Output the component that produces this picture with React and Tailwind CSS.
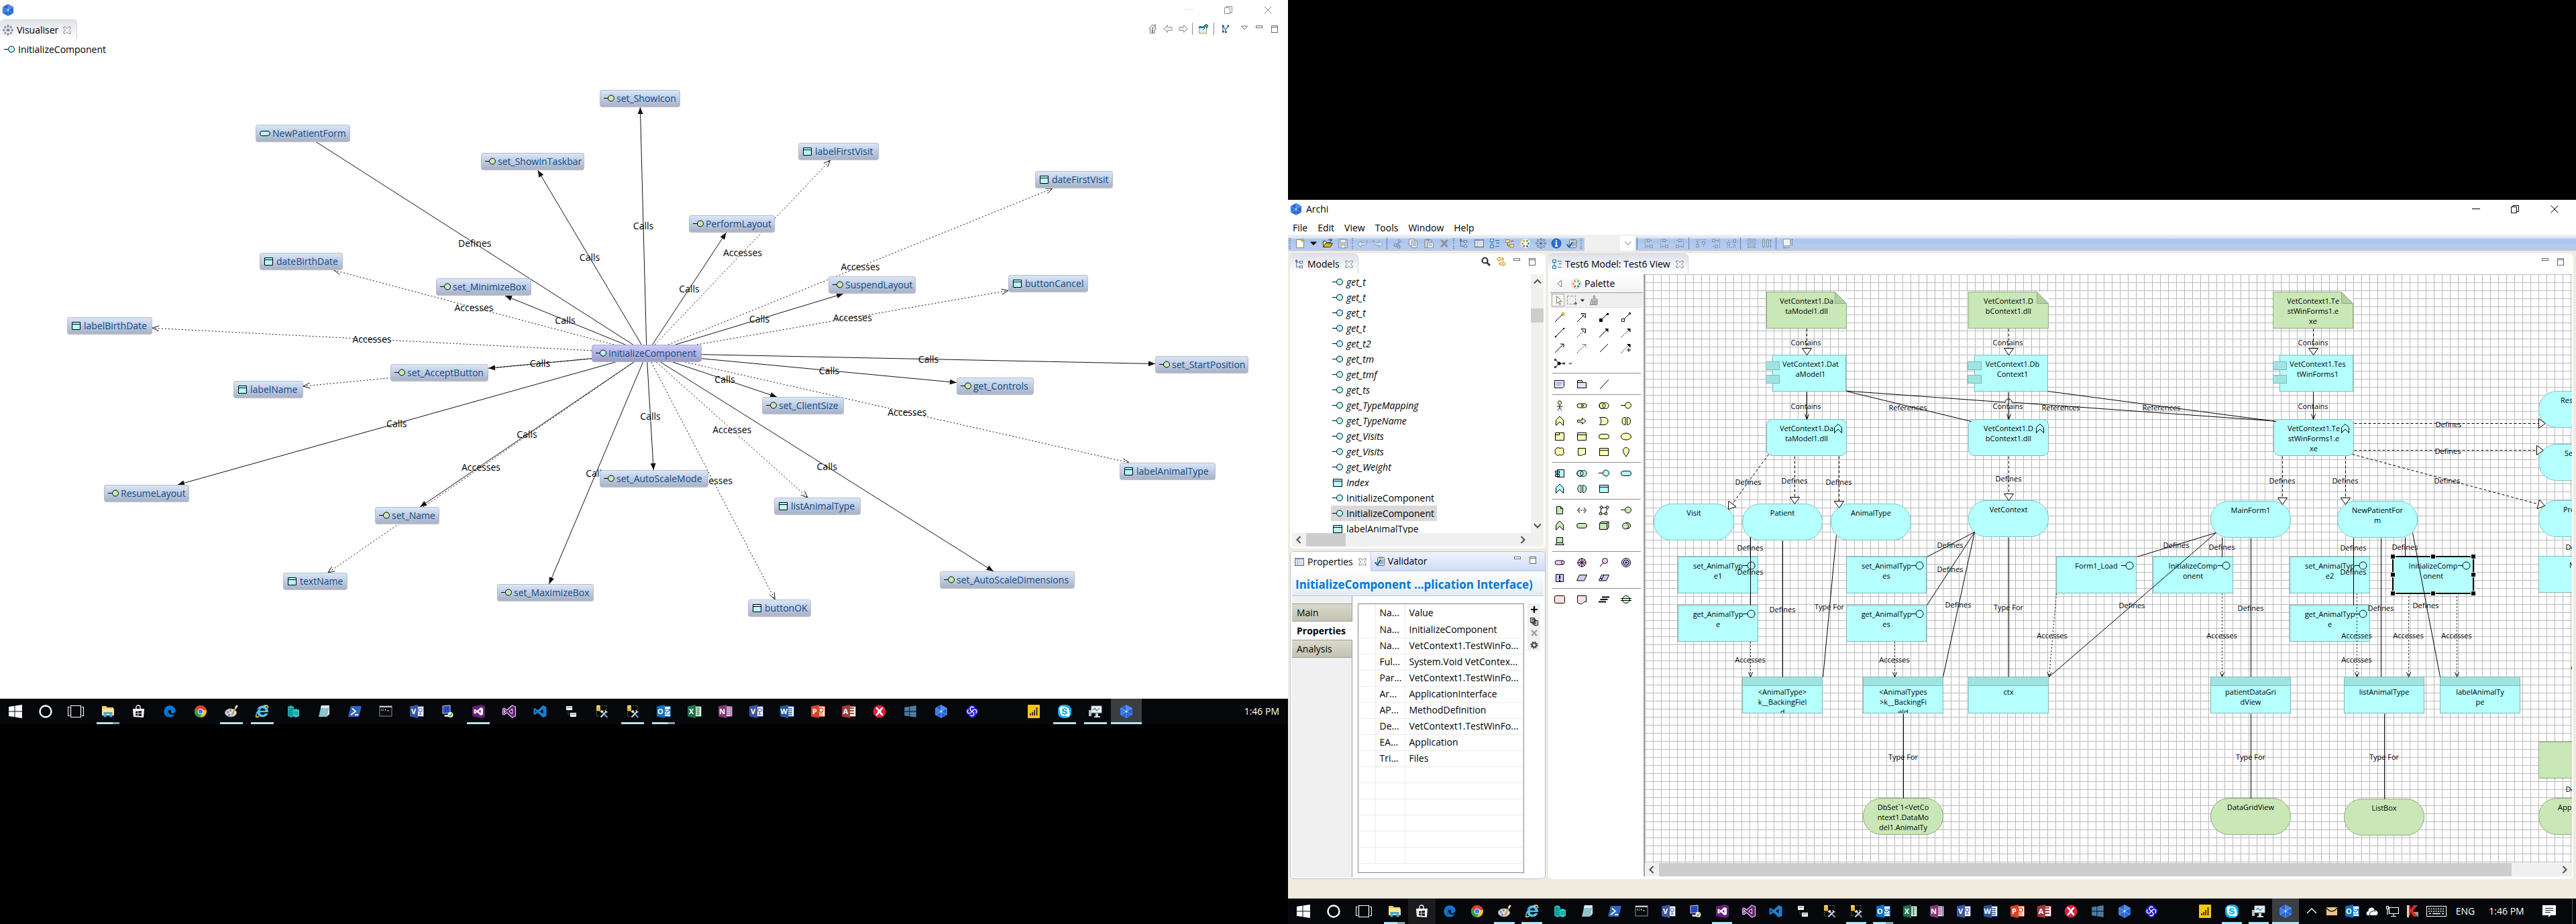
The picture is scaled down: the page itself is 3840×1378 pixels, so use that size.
import React from "react";
import { FaEdge, FaInternetExplorer, FaSkype, FaWindows } from "react-icons/fa";

/* ---------- shared ---------- */

const Svg = ({ s = 16, v = 16, className = "", children, ...rest }) => (
  <svg width={s} height={s} viewBox={`0 0 ${v} ${v}`} fill="none" className={`shrink-0 ${className}`} aria-hidden="true" {...rest}>
    {children}
  </svg>
);

const ArchiLogo = ({ s = 18 }) => (
  <Svg s={s} v={20}>
    <path d="M10 .5 18.500 5v10L10 19.500 1.500 15V5z" fill="#2463d2" stroke="#3f7be0" strokeWidth="1" />
    <path d="M10 1 18 5 10 10z" fill="#4a8af0" />
    <path d="M2 5v10l8-5z" fill="#3a78e6" />
    <path d="M10 1v18M2 5l16 10M18 5 2 15" stroke="#8db8fa" strokeWidth=".8" />
    <circle cx="10" cy="10" r="1.800" fill="#bcd6ff" />
  </Svg>
);

const CloseTab = () => (
  <Svg s={12} v={12}>
    <path d="M1 1h2.500L6 3.500 8.500 1H11v2.500L8.500 6 11 8.500V11H8.500L6 8.500 3.500 11H1V8.500L3.500 6 1 3.500z" stroke="#777" fill="#fff" />
  </Svg>
);
const MinIcon = () => (
  <Svg>
    <rect x="3.500" y="3.500" width="9" height="3" fill="#fff" stroke="#6b6b6b" />
  </Svg>
);
const MaxIcon = () => (
  <Svg>
    <rect x="3.500" y="3.500" width="9" height="10" fill="#fff" stroke="#6b6b6b" />
    <path d="M3 5.500h10" stroke="#6b6b6b" />
  </Svg>
);

const WindowButtons = ({ dim }) => {
  const c = dim ? "#8a8a8a" : "#000";
  return (
    <div className="flex h-full">
      <button aria-label="Minimize" className="flex w-[58px] items-center justify-center">
        <Svg s={12} v={12}><path d="M0 5.500h12" stroke={dim ? "#e0e0e0" : c} /></Svg>
      </button>
      <button aria-label="Restore" className="flex w-[58px] items-center justify-center">
        <Svg s={12} v={12}><path d="M.5 2.500h8v9h-8zM3 2.500v-2h8.500v9H9" stroke={c} /></Svg>
      </button>
      <button aria-label="Close" className="flex w-[60px] items-center justify-center">
        <Svg s={12} v={12}><path d="M.5.5l11 11M11.500.5l-11 11" stroke={c} /></Svg>
      </button>
    </div>
  );
};

const CY = "#b5ffff";
const YE = "#ffffb5";
const GR = "#c9e7b7";
const K = "#000";

const Iface = ({ fill = CY }) => (
  <Svg>
    <path d="M0 7.500h6" stroke={K} />
    <circle cx="11" cy="7.500" r="4.500" fill={fill} stroke={K} />
  </Svg>
);
const DataObj = ({ fill = CY }) => (
  <Svg>
    <path d="M1.500 2.500h13v11h-13zM1.500 5.500h13" fill={fill} stroke={K} />
  </Svg>
);
const SmallData = () => (
  <Svg>
    <path d="M1.500 2.500h12v11h-12zM1.500 5.500h12" fill={CY} stroke={K} />
  </Svg>
);
const FuncPill = ({ fill = CY }) => (
  <Svg>
    <rect x=".5" y="4.500" width="15" height="7" rx="3.500" fill={fill} stroke={K} />
  </Svg>
);
const RING = [[8, 1.8], [12.4, 3.6], [14.2, 8], [12.4, 12.4], [8, 14.2], [3.6, 12.4], [1.8, 8], [3.6, 3.6]];
const Radial = () => (
  <Svg>
    {RING.map(([x, y]) => <circle key={`${x}-${y}`} cx={x} cy={y} r="1.200" fill="#fff" stroke="#3c4358" strokeWidth=".9" />)}
    <path d="M8 4.500v7M4.500 8h7M5.500 5.500l5 5M10.500 5.500l-5 5" stroke="#6a7185" strokeWidth=".7" />
    <circle cx="8" cy="8" r="1.200" fill="#3c4358" />
  </Svg>
);
const TreeIcon = () => (
  <Svg>
    <path d="M3.500 2v11M3.500 5h5M3.500 12h5" stroke="#5a6f99" />
    <rect x="2" y="1.500" width="3" height="3" fill="#5a6f99" />
    <rect x="8.500" y="3.500" width="4" height="3" fill="#fff" stroke="#5a6f99" />
    <rect x="8.500" y="10.500" width="4" height="3" fill="#fff" stroke="#5a6f99" />
  </Svg>
);
const TableIcon = () => (
  <Svg>
    <rect x="1.500" y="2.500" width="13" height="11" fill="#fff" stroke="#5f6f88" />
    <path d="M1.500 3.500h13" stroke="#7f97c0" strokeWidth="2" />
    <path d="M2 6.500h12M2 8.500h12M2 10.500h12M2 12.500h12M5.500 4v9" stroke="#9fb0c8" strokeWidth=".8" />
  </Svg>
);
const DiagramIcon = () => (
  <Svg>
    <path d="M1.500 1.500h5v4h-5zM1.500 10.500h5v4h-5z" fill="#d6f0fa" stroke="#1d6fa5" />
    <path d="M9 3.500h6M9 12.500h6M10 7.500h5" stroke="#1d6fa5" />
    <path d="M4 6v4" stroke="#1d6fa5" />
  </Svg>
);
const ClipIcon = () => (
  <Svg>
    <rect x="4.500" y="2.500" width="10" height="12" rx="1" fill="#cfd8e6" stroke="#8a6b3f" />
    <rect x="7" y="1" width="5" height="3" fill="#9a9a9a" />
    <path d="M8 7h5M8 9h5M8 11h5" stroke="#6f86b0" />
    <path d="M.8 9.500 4.200 13.500 9 6" stroke="#1565c0" strokeWidth="2.200" />
  </Svg>
);
const PaletteIcon = () => (
  <Svg>
    <circle cx="8" cy="8" r="7.300" fill="#eef2f6" stroke="#c9d2da" />
    <circle cx="5.500" cy="4.300" r="1.500" fill="#d8a000" /><circle cx="10.500" cy="4.300" r="1.500" fill="#4caf50" />
    <circle cx="3.500" cy="8.300" r="1.500" fill="#f28c28" /><circle cx="12.500" cy="8.300" r="1.500" fill="#2e9e3e" />
    <circle cx="5.700" cy="12" r="1.500" fill="#e53935" /><circle cx="10.500" cy="12" r="1.500" fill="#1e64d8" />
  </Svg>
);

/* ---------- relationship graph (left monitor) ---------- */

const GRAPH_TOP = 90;
const HUB = { x: 882, y: 514, w: 164, label: "InitializeComponent" };
const GRAPH = [
  { label: "NewPatientForm", x: 381, y: 186, w: 141, k: "p", rel: "Defines" },
  { label: "set_ShowIcon", x: 894, y: 134, w: 120, k: "i", rel: "Calls" },
  { label: "set_ShowInTaskbar", x: 717, y: 228, w: 154, k: "i", rel: "Calls" },
  { label: "labelFirstVisit", x: 1190, y: 213, w: 120, k: "d", rel: "Accesses" },
  { label: "dateFirstVisit", x: 1543, y: 255, w: 116, k: "d", rel: "Accesses" },
  { label: "PerformLayout", x: 1027, y: 321, w: 128, k: "i", rel: "Calls" },
  { label: "dateBirthDate", x: 387, y: 377, w: 124, k: "d", rel: "Accesses" },
  { label: "set_MinimizeBox", x: 650, y: 415, w: 142, k: "i", rel: "Calls" },
  { label: "SuspendLayout", x: 1235, y: 412, w: 130, k: "i", rel: "Calls" },
  { label: "buttonCancel", x: 1503, y: 410, w: 119, k: "d", rel: "Accesses" },
  { label: "labelBirthDate", x: 100, y: 473, w: 127, k: "d", rel: "Accesses" },
  { label: "set_AcceptButton", x: 582, y: 543, w: 146, k: "i", rel: "Calls" },
  { label: "labelName", x: 348, y: 568, w: 104, k: "d", rel: "Accesses" },
  { label: "set_StartPosition", x: 1722, y: 531, w: 139, k: "i", rel: "Calls" },
  { label: "get_Controls", x: 1426, y: 563, w: 115, k: "i", rel: "Calls" },
  { label: "set_ClientSize", x: 1136, y: 592, w: 122, k: "i", rel: "Calls" },
  { label: "labelAnimalType", x: 1669, y: 690, w: 143, k: "d", rel: "Accesses" },
  { label: "ResumeLayout", x: 155, y: 723, w: 127, k: "i", rel: "Calls" },
  { label: "set_AutoScaleMode", x: 894, y: 701, w: 162, k: "i", rel: "Calls" },
  { label: "listAnimalType", x: 1154, y: 742, w: 129, k: "d", rel: "Accesses" },
  { label: "set_Name", x: 559, y: 756, w: 96, k: "i", rel: "Calls" },
  { label: "textName", x: 422, y: 854, w: 96, k: "d", rel: "Accesses" },
  { label: "set_MaximizeBox", x: 741, y: 871, w: 144, k: "i", rel: "Calls" },
  { label: "set_AutoScaleDimensions", x: 1401, y: 852, w: 201, k: "i", rel: "Calls" },
  { label: "buttonOK", x: 1115, y: 894, w: 94, k: "d", rel: "Accesses" },
];

const NODE_H = 26;
const centre = (n) => [n.x + n.w / 2, n.y + NODE_H / 2 - GRAPH_TOP];
const clipTo = (n, [fx, fy]) => {
  const [cx, cy] = centre(n);
  const dx = fx - cx, dy = fy - cy;
  const t = Math.min(n.w / 2 / Math.abs(dx || 1e-6), NODE_H / 2 / Math.abs(dy || 1e-6));
  return [cx + dx * t, cy + dy * t];
};
const LINKS = GRAPH.map((n) => ({ n, a: clipTo(HUB, centre(n)), b: clipTo(n, centre(HUB)) }));

const Arrow = ({ from, to, kind, len = 10, half = 4, dash, color = "#000" }) => {
  const [x1, y1] = from, [x2, y2] = to;
  const d = Math.hypot(x2 - x1, y2 - y1);
  const ux = (x2 - x1) / d, uy = (y2 - y1) / d;
  const bx = x2 - ux * len, by = y2 - uy * len;
  const a = [bx - uy * half, by + ux * half], b = [bx + uy * half, by - ux * half];
  const end = kind === "tri" ? [bx, by] : [x2, y2];
  return (
    <g stroke={color} fill="none">
      <line x1={x1} y1={y1} x2={end[0]} y2={end[1]} strokeDasharray={dash} />
      {kind === "solid" && <path d={`M${x2} ${y2}L${a}L${b}Z`} fill={color} stroke="none" />}
      {kind === "open" && <path d={`M${a}L${x2} ${y2}L${b}`} />}
      {kind === "tri" && <path d={`M${a}L${x2} ${y2}L${b}Z`} fill="#fff" />}
    </g>
  );
};

const GraphNode = ({ n, hub }) => (
  <div
    className={`absolute flex h-[26px] items-center gap-[3px] overflow-hidden whitespace-nowrap rounded-[4px] border border-b-2 pl-[5px] text-[14px] leading-[20px] text-[#0c4a86] ${
      hub ? "border-[#a9a9c0] bg-linear-to-b from-[#cccaff] to-[#9d9bc8]" : "border-[#b9bcc4] bg-linear-to-b from-[#d9e6fa] to-[#a8b3ca]"
    }`}
    style={{ left: n.x, top: n.y - GRAPH_TOP, width: n.w }}
  >
    {n.k === "d" ? <SmallData /> : n.k === "p" ? <FuncPill /> : <Iface fill={hub ? CY : GR} />}
    {n.label}
  </div>
);

const Graph = () => (
  <div className="relative min-h-0 flex-1 overflow-hidden">
    <svg className="absolute inset-0 h-full w-full" aria-hidden="true">
      {LINKS.map(({ n, a, b }) => {
        const kind = n.rel === "Calls" ? "solid" : n.rel === "Accesses" ? "open" : "none";
        return <Arrow key={n.label} from={a} to={b} kind={kind} dash={n.rel === "Accesses" ? "2 3" : undefined} color="#111" />;
      })}
    </svg>
    {LINKS.map(({ n, a, b }) => (
      <span key={n.label} className="absolute -translate-x-1/2 -translate-y-1/2 text-[14px] leading-[20px] text-black" style={{ left: (a[0] + b[0]) / 2, top: (a[1] + b[1]) / 2 }}>
        {n.rel}
      </span>
    ))}
    {GRAPH.map((n) => <GraphNode key={n.label} n={n} />)}
    <GraphNode n={HUB} hub />
  </div>
);

const LeftWindow = () => (
  <section className="flex min-h-0 flex-1 flex-col bg-white">
    <header className="flex h-[29px] items-center justify-between pl-[3px]">
      <ArchiLogo />
      <WindowButtons dim />
    </header>
    <div className="flex h-[29px] items-start justify-between">
      <div className="flex h-full items-center rounded-t-[6px] border-r border-t border-[#d3d3df] bg-linear-to-b from-[#e1e1e9] to-white pl-[4px] pr-[8px] pt-[2px]">
        <Radial />
        <span className="ml-[5px] mr-[7px] text-[14px] leading-[20px]">Visualiser</span>
        <button aria-label="Close Visualiser"><CloseTab /></button>
      </div>
      <div className="flex h-[27px] items-center pr-[12px]">
        <button aria-label="Home" className="flex w-[23px] justify-center">
          <Svg><path d="M2.500 8 8 1.500 13.500 8h-2v6.500h-7V8zM11 4V1.500h1.500v4" stroke="#888" fill="#eee" /><path d="M7 9h2v5H7z" fill="#777" /><path d="M7 6h2v2H7z" fill="#777" /></Svg>
        </button>
        <button aria-label="Back" className="flex w-[23px] justify-center">
          <Svg><path d="M1.500 8 7.500 2.500v3h6.500v5H7.500v3z" stroke="#8f8f8f" fill="#eee" /></Svg>
        </button>
        <button aria-label="Forward" className="flex w-[23px] justify-center">
          <Svg><path d="M14.500 8 8.500 2.500v3H2v5h6.500v3z" stroke="#8f8f8f" fill="#eee" /></Svg>
        </button>
        <span className="mx-[2px] h-[18px] w-px bg-[#888]" />
        <button aria-label="Pin content" className="flex w-[27px] justify-center">
          <Svg><rect x="1.500" y="4.500" width="11" height="10" fill="#d8f2fa" stroke="#b79c55" /><path d="M1 5.500h9" stroke="#2f74c8" strokeWidth="3" /><path d="M7 10 10 7" stroke="#555" /><path d="M9 3l4 4 2-4-3-2z" fill="#3fae49" stroke="#1c7a2a" /></Svg>
        </button>
        <span className="mx-[2px] h-[18px] w-px bg-[#888]" />
        <button aria-label="Layout" className="flex w-[29px] justify-center">
          <Svg><path d="M4 12V4l4 5 4-5M8 9v4" stroke="#4a86c8" strokeWidth="1.500" /><path d="M3 2.500h2.500V5H3zM10.500 2.500H13V5h-2.500zM3 11h2.500v2.500H3zM7 11.500h2.500V14H7z" fill="#1c3f78" /></Svg>
        </button>
        <button aria-label="View menu" className="flex w-[28px] justify-center pb-[4px]">
          <Svg><path d="M3.500 6h9L8 11z" stroke="#666" fill="#fff" /></Svg>
        </button>
        <button aria-label="Minimize view" className="flex w-[16px] justify-center"><MinIcon /></button>
        <button aria-label="Maximize view" className="ml-[7px] flex w-[16px] justify-center"><MaxIcon /></button>
      </div>
    </div>
    <div className="flex h-[32px] items-center gap-[5px] pl-[6px] text-[14px] leading-[20px]">
      <Iface />
      InitializeComponent
    </div>
    <Graph />
  </section>
);

/* ---------- taskbar ---------- */

const Office = ({ c, d, l, children }) => (
  <Svg s={22} v={22}>
    <rect x="10" y="4" width="11" height="14" fill="#fff" />
    {children || <path d="M13 7h6M13 10h6M13 13h6M13 16h6" stroke={c} strokeWidth="1.300" />}
    <path d="M10 3.500h11.500v15H10" stroke={c} />
    <path d="M1 3.500 13 1v20L1 18.500z" fill={d || c} />
    <text x="6.500" y="15" fontSize="11" fontWeight="700" textAnchor="middle" fill="#fff" fontFamily="Open Sans, sans-serif">{l}</text>
  </Svg>
);
const grid = (c) => <path d="M13 6h7M13 9h7M13 12h7M13 15h7M16.500 5v12" stroke={c} />;
const Tools = () => (
  <Svg s={20} v={20}>
    <path d="M2 1.500h6v8H2z" fill="#e2b93b" /><ellipse cx="5" cy="2" rx="3" ry="1.200" fill="#f7dd7d" />
    <path d="M10 1.500h7v6M2.500 11v6h5" stroke="#4f8a3f" strokeDasharray="2 1.500" />
    <path d="M8.500 18.500 17 10" stroke="#e4e6ea" strokeWidth="1.800" /><path d="M10 10l8 8.500" stroke="#c9ccd2" strokeWidth="1.600" /><path d="M14 14.500l4.500 4.500" stroke="#6a8fc7" strokeWidth="2.200" />
    <path d="M7.500 10.500 10 8l3 1.500-3 3z" fill="#dfe2e6" /><path d="M15 8l1 2.500 2.500.5" stroke="#e4e6ea" strokeWidth="1.300" />
  </Svg>
);
const VS_SHAPE = "M15.500 2 20.500 4v14l-5 2L7.500 13 3.500 16 1.500 15V7L3.500 6l4 3zM15.500 7.500v7L11 11zM3.500 9v4l2-2z";

const ICONS = {
  Start: <Svg s={20} v={20}><path d="M0 3 8.500 1.800V9.500H0zM9.500 1.600 20 0v9.500H9.500zM0 10.500h8.500v7.700L0 17zM9.500 10.500H20V20L9.500 18.400z" fill="#fff" /></Svg>,
  Cortana: <Svg s={20} v={20}><circle cx="10" cy="10" r="8.500" stroke="#fff" strokeWidth="2.400" /></Svg>,
  "Task View": <Svg s={24} v={24}><path d="M4.500 3.500h15v17h-15zM3 5.500H.5v13H3M21 5.500h2.500v13H21" stroke="#fff" strokeWidth="1.200" /></Svg>,
  Explorer: <Svg s={20} v={20}><path d="M1 2h6l2 2h9v11H1z" fill="#f6cf5f" /><path d="M1 6h18v10H1z" fill="#ffe596" /><path d="M3.500 18.500V11h13v7.500h-4V14h-5v4.500z" fill="#3fa9e0" /></Svg>,
  Store: <Svg s={20} v={20}><path d="M1 6h17l-1 13-15-1z" fill="#fff" /><path d="M6 7V3.500Q6 1 9 1t3 2.500V7" stroke="#fff" strokeWidth="1.300" /><path d="M5 10l3.500-.5V12.500H5zM9.300 9.400 14 9v3.500H9.300zM5 13.500h3.500v3L5 16zM9.300 13.500H14V17l-4.700-.5z" fill="#111" /></Svg>,
  Edge: <FaEdge size={18} color="#0b78d7" />,
  Chrome: <Svg s={20} v={20}><circle cx="10" cy="10" r="9" fill="#f7c91c" /><path d="M2.200 5.500A9 9 0 0 1 17.800 5.500L19 8h-9L6 12z" fill="#e23b2e" /><path d="M2.200 5.500A9 9 0 0 0 9.500 19l4-7.500H6z" fill="#2fa24c" /><circle cx="10" cy="10" r="4.300" fill="#fff" /><circle cx="10" cy="10" r="3.300" fill="#3f7fe8" /></Svg>,
  Paint: <Svg s={20} v={20}><ellipse cx="9" cy="12" rx="8.500" ry="6" fill="#cfe1ee" stroke="#8ba6b8" /><circle cx="4.500" cy="11" r="1.700" fill="#e2574c" /><circle cx="8.500" cy="8.800" r="1.600" fill="#5bb04e" /><circle cx="6.500" cy="15" r="1.600" fill="#3f74c8" /><circle cx="13" cy="13.500" r="1.500" fill="#e8b93c" /><path d="M10 16 17.500 3" stroke="#d98b3a" strokeWidth="2.200" /><path d="M16 5 18.500 1" stroke="#f4dcb5" strokeWidth="3" /></Svg>,
  "Internet Explorer": <Svg s={20} v={20}><FaInternetExplorer size={19} color="#4fc3f0" /><path d="M1 16Q-1 20 5 17.500M12 3Q19-1 18.500 5" stroke="#f6c52e" strokeWidth="1.800" /></Svg>,
  Servers: <Svg s={20} v={20}><path d="M2 3 7 1l4 2v14l-4 2-5-2z" fill="#1fb3b8" /><path d="M10 8l4-2 5 2v9l-5 2-4-2z" fill="#2fd0d2" /><path d="M3 6h7M3 9h7M3 12h7M3 15h7M11 11h7M11 14h7" stroke="#08696e" /></Svg>,
  Notepad: <Svg s={20} v={20}><path d="M6 1h12l-4 17H2z" fill="#8fc3cf" /><path d="M6 1h12l-1 4H5z" fill="#d9edf0" /><path d="M14 18l4-17v13z" fill="#e9e9e9" /></Svg>,
  PowerShell: <Svg s={20} v={20}><path d="M4 2h16l-4 16H0z" fill="#2f64c4" /><path d="M6 5.500 11 10l-7 5M10 15h5" stroke="#fff" strokeWidth="1.800" /></Svg>,
  "Command Prompt": <Svg s={20} v={20}><rect x="1" y="2" width="18" height="15" fill="#0a0a0a" stroke="#8f8f8f" /><path d="M1 3h18" stroke="#c9c9c9" strokeWidth="2" /><path d="M4 6v3M6.500 6v1M6.500 8v1M9 6l1 3M12 9h3" stroke="#ddd" /></Svg>,
  Visio: <Office c="#3955a3" l="V"><path d="M14 7h5v4h-5zM16.500 11v4M14 15h5" stroke="#3955a3" /></Office>,
  "Remote Desktop": <Svg s={20} v={20}><path d="M3 2l11-1v11L3 13z" fill="#2447c8" stroke="#cdd6e6" /><path d="M5 15h8l2 3H6z" fill="#c9ced6" /><circle cx="14.500" cy="15" r="4" fill="#e8efe4" /><path d="M12.500 15l1.500 2 3-4" stroke="#4b9c3c" strokeWidth="1.500" /></Svg>,
  "Visual Studio": <Svg s={22} v={22}><path d="M2 4 15 1l6 2v16l-6 2L2 18z" fill="#68217a" /><path d="M14.500 5 18 6.500v9L14.500 17 9 12.300 6 14.500 4.500 13.700V8.300L6 7.500l3 2.200zM14.500 8.500v5L11.500 11zM6 9.500v3L7.500 11z" fill="#fff" fillRule="evenodd" /></Svg>,
  "Visual Studio 2013": <Svg s={22} v={22}><path d={VS_SHAPE} fill="#68217a" stroke="#e6d8ea" strokeWidth="1.100" fillRule="evenodd" /></Svg>,
  "Visual Studio Code": <Svg s={22} v={22}><path d={VS_SHAPE} fill="#1b80cc" fillRule="evenodd" /></Svg>,
  Network: <Svg s={20} v={20}><path d="M3 2h9v6H3z" fill="#fff" /><path d="M9 12h9v6H9z" fill="#fff" /><path d="M4 4h7M10 14h7" stroke="#555" /><path d="M6 8v6h3" stroke="#777" strokeDasharray="1 1" /></Svg>,
  "SQL Tools": <Tools />,
  "SQL Profiler": <Tools />,
  Outlook: <Office c="#0a70c8" l="O"><path d="M11 8h10v7H11zM11 8l5 4.500L21 8" stroke="#0a70c8" strokeWidth="1.200" /></Office>,
  Excel: <Office c="#1f7244" l="X">{grid("#1f7244")}</Office>,
  OneNote: <Office c="#80397b" l="N"><path d="M13 6h5M13 9h5M13 12h5M13 15h5M19.500 4v14" stroke="#80397b" strokeWidth="1.400" /></Office>,
  "Visio 2": <Office c="#3955a3" l="V"><path d="M14 7h5v4h-5zM16.500 11v4M14 15h5" stroke="#3955a3" /></Office>,
  Word: <Office c="#2a5699" l="W" />,
  PowerPoint: <Office c="#d24625" l="P"><circle cx="16" cy="9" r="3" stroke="#d24625" strokeWidth="1.300" /><path d="M13 14h6M13 16.500h6" stroke="#d24625" /></Office>,
  Access: <Office c="#a4373a" l="A"><path d="M13 6h6M13 10h6M13 14h6" stroke="#a4373a" strokeWidth="2" /></Office>,
  XMind: <Svg s={20} v={20}><circle cx="10" cy="10" r="9.500" fill="#d6213f" /><path d="M5 4.500q4 2.500 4 5.500t-4 5.500M15 4.500q-4 2.500-4 5.500t4 5.500M8 10h4" stroke="#fff" strokeWidth="2.600" /></Svg>,
  Windows: <FaWindows size={20} color="#4a7ca4" />,
  "Archi 3": <ArchiLogo s={20} />,
  Swirl: (
    <Svg s={20} v={20}>
      <g fill="#2a22c8"><circle cx="10" cy="6" r="5.500" /><circle cx="14" cy="10" r="5.500" /><circle cx="10" cy="14" r="5.500" /><circle cx="6" cy="10" r="5.500" /></g>
      <g stroke="#fff" strokeWidth="1.300"><path d="M10 10Q6 7.500 7.500 4.500 10 2 12.500 4.500" /><path d="M10 10Q12.500 6 15.500 7.500 18 10 15.500 12.500" /><path d="M10 10Q14 12.500 12.500 15.500 10 18 7.500 15.500" /><path d="M10 10Q7.500 14 4.500 12.500 2 10 4.500 7.500" /></g>
    </Svg>
  ),
  gap: null,
  "Power BI": <Svg s={20} v={20}><rect x="1" y="0" width="18" height="20" rx="1" fill="#f2c811" /><path d="M5 16v-3M8 16v-5M11 16V8M14.500 16V4" stroke="#222" strokeWidth="1.700" /></Svg>,
  Skype: <span className="flex h-[20px] w-[20px] items-center justify-center rounded-[8px] bg-[#00aff0]"><FaSkype size={18} color="#fff" /></span>,
  Monitor: <Svg s={20} v={20}><path d="M4 2h15v10H4z" fill="#f3f6f8" stroke="#b9c2c8" /><path d="M6 8l3-3 3 4 4-4" stroke="#2f8fc0" strokeWidth="1.300" /><path d="M10 13h4v4h3v2H8v-2h2z" fill="#cfd4d8" /><path d="M0 8h4v9H0z" fill="#b9bec2" /></Svg>,
  Archi: <ArchiLogo s={20} />,
};
const APPS = Object.keys(ICONS).slice(3);

const Taskbar = ({ wide, running, hot, children }) => (
  <footer className="flex h-[38px] shrink-0 items-stretch overflow-hidden bg-[#05070a] text-white">
    <div className="mr-[3px] flex">
      {["Start", "Cortana", "Task View"].map((n) => (
        <button key={n} aria-label={n} className="flex w-[45px] items-center justify-center">{ICONS[n]}</button>
      ))}
    </div>
    {APPS.map((n, i) => {
      const active = n === "Archi";
      const w = wide ? "w-[46px]" : i < 9 ? "w-[41px]" : "w-[40px]";
      if (n === "gap") return <span key={n} className={w} />;
      return (
        <button key={n} aria-label={n} className={`relative flex items-center justify-center ${w} ${active ? "bg-[#3b3f44]" : hot === n ? "bg-[#1c1c1f]" : ""}`}>
          {ICONS[n]}
          {running.includes(n) && <span className={`absolute bottom-0 h-[3px] bg-[#aee8fa] ${active ? "inset-x-0" : wide ? "inset-x-[6px]" : "inset-x-[5px]"}`} />}
          {(n === "Explorer" || n === "Outlook") && <span className="absolute bottom-0 right-[6px] h-[3px] w-[10px] bg-[#7fa6b2]" />}
        </button>
      );
    })}
    <div className="flex flex-1 items-center justify-end">{children}</div>
  </footer>
);

const RUN = ["Explorer", "Paint", "Internet Explorer", "Visual Studio", "SQL Profiler", "Outlook", "Skype", "Monitor", "Archi"];

/* ---------- Archi main window (right monitor) ---------- */

const Handle = () => <span className="flex w-[6px] justify-center"><span className="h-[16px] border-l-2 border-dotted border-[#8c94a8]" /></span>;
const Sep = () => <span className="flex w-[5px] justify-center"><span className="h-[18px] w-px bg-[#6f7f9f]" /></span>;
const TB = ({ label, children, className = "w-[23px]" }) => (
  <button aria-label={label} className={`flex items-center justify-center ${className}`}>{children}</button>
);
const G = "#8d94a3";
const Align = ({ r }) => (
  <Svg className={r}>
    <path d="M2.500 1v14" stroke={G} strokeDasharray="2 1" />
    <rect x="5.500" y="1.500" width="4" height="4" stroke={G} /><rect x="9.500" y="10.500" width="4" height="4" stroke={G} />
    <path d="M4 12.500h5M13 3.500h-2M6 10.500l-2 2 2 2" stroke={G} />
  </Svg>
);

const Toolbar = () => (
  <div className="flex h-[24px] items-center bg-[linear-gradient(#f1f0ee_0px,#e3e9f8_4px,#a9c7ef_7px,#a9c7ef_12px,#b8c9ee_14px,#b8c9ee_24px)] pt-[2px]">
    <Handle />
    <TB label="New"><Svg><path d="M2.500 2.500h8l3 3v9h-11z" fill="#fdfdf4" stroke="#8a8a7a" /><path d="M12 0v7M8.500 3.500h7M10 1.500l4 4M14 1.500l-4 4" stroke="#c89b2a" /></Svg></TB>
    <TB label="New menu" className="w-[17px]"><Svg s={10} v={10}><path d="M0 2.500h10L5 8z" fill="#000" /></Svg></TB>
    <TB label="Open" className="ml-px w-[23px]"><Svg><path d="M1.500 13.500v-9h4l1 2h6v2" fill="#f7e27b" stroke="#333" /><path d="M1.500 13.500 5 8h10.500L12 13.500z" fill="#d8b921" stroke="#333" /><path d="M9 3q3-3 5 1M14 1v3h-3" stroke="#333" /></Svg></TB>
    <TB label="Save"><Svg><path d="M1.500 1.500h12l1 1v12h-13z" fill="#c8cfdd" stroke={G} /><path d="M4 2h8v5H4zM5 10h6v5H5z" fill="#eef1f7" stroke={G} /></Svg></TB>
    <Handle />
    <TB label="Undo"><Svg><path d="M1 9 6 4v3q8 1 9-4 1 8-9 8v3z" fill="#dde3ee" stroke={G} /></Svg></TB>
    <TB label="Redo"><Svg><path d="M15 9 10 4v3Q2 8 1 3q-1 8 9 8v3z" fill="#dde3ee" stroke={G} /></Svg></TB>
    <Sep />
    <TB label="Cut" className="ml-[2px] w-[23px]"><Svg><path d="M9 1v9M13 4 5 10" stroke={G} strokeWidth="1.500" /><circle cx="4" cy="10.500" r="2" stroke={G} strokeWidth="1.500" /><circle cx="9" cy="13" r="2" stroke={G} strokeWidth="1.500" /></Svg></TB>
    <TB label="Copy"><Svg><path d="M1.500 1.500h8v10h-8z" fill="#e3e8f2" stroke={G} /><path d="M5.500 4.500h8v10h-8z" fill="#e3e8f2" stroke={G} /><path d="M7 7h5M7 9h5M7 11h5" stroke={G} /></Svg></TB>
    <TB label="Paste"><Svg><rect x="1.500" y="2.500" width="10" height="12" fill="#c2c9d8" stroke={G} /><rect x="4" y="1" width="5" height="3" fill={G} /><path d="M6.500 6.500h8v8h-8z" fill="#eef1f7" stroke={G} /><path d="M8 9h5M8 11h5" stroke={G} /></Svg></TB>
    <TB label="Delete"><Svg><path d="M2 3.500 4.500 2 8 5.500 11.500 2 14 3.500 10 8l4 4.500-2.500 1.500L8 10.500 4.500 14 2 12.500 6 8z" fill="#8c919c" /></Svg></TB>
    <Handle />
    <TB label="Models"><TreeIcon /></TB>
    <TB label="Properties"><TableIcon /></TB>
    <TB label="Outline"><DiagramIcon /></TB>
    <TB label="Navigator"><Svg><path d="M1.500 2.500h6v4h-6zM7.500 9.500h6v4h-6z" fill="#f9dd9a" stroke="#b98627" /><path d="M4.500 7v4.500H7M9 4.500h4" stroke="#555" /></Svg></TB>
    <TB label="Palette"><PaletteIcon /></TB>
    <TB label="Visualiser"><Radial /></TB>
    <TB label="Hints"><Svg><circle cx="8" cy="8" r="7" fill="#2b6fd6" stroke="#1a4fa8" /><path d="M8 3v2.200M6.500 7H8v5M6 12h4" stroke="#fff" strokeWidth="1.800" /></Svg></TB>
    <TB label="Validator"><ClipIcon /></TB>
    <Handle />
    <span className="relative ml-[2px] flex h-[22px] w-[76px] bg-[#f0f0f0]">
      <select aria-label="Zoom" disabled className="h-full w-full appearance-none border-r-[23px] border-white bg-[#f0f0f0] opacity-100" />
      <Svg s={12} v={12} className="absolute right-[5px] top-[5px]"><path d="M1.500 3.500 6 8l4.500-4.500" stroke="#a6a6a6" strokeWidth="1.300" /></Svg>
    </span>
    <Sep />
    <TB label="Align left" className="ml-[3px] w-[23px]"><Align /></TB>
    <TB label="Align center"><Align /></TB>
    <TB label="Align right"><Align r="-scale-x-100" /></TB>
    <Sep />
    <TB label="Align top" className="ml-[3px] w-[23px]"><Align r="rotate-90" /></TB>
    <TB label="Align middle"><Align r="rotate-180" /></TB>
    <TB label="Align bottom"><Align r="-rotate-90" /></TB>
    <Sep />
    <TB label="Match width" className="ml-[2px] w-[23px]"><Svg><path d="M2.500 1.500h11v3h-11zM2.500 7.500h11v3h-11zM2 13.500h12M4 12l-2 1.500L4 15M12 12l2 1.500-2 1.500" stroke={G} /></Svg></TB>
    <TB label="Match height"><Svg><path d="M1.500 2.500h3v11h-3zM7.500 2.500h3v11h-3zM13.500 2v12M12 4l1.500-2L15 4M12 12l1.500 2 1.500-2" stroke={G} /></Svg></TB>
    <Sep />
    <TB label="Default size" className="ml-[3px] w-[23px]"><Svg><rect x="1.500" y="1.500" width="10" height="10" fill="#f4f4f4" stroke={G} /><path d="M14.500 1v11M1 14.500h11M13 3l1.500-2L16 3M3 13l-2 1.500L3 16" stroke={G} /></Svg></TB>
  </div>
);

const Chevron = ({ d }) => (
  <Svg s={14} v={14} className={{ up: "", down: "rotate-180", left: "-rotate-90", right: "rotate-90" }[d]}>
    <path d="M2 9.500 7 4.500l5 5" stroke="#505050" strokeWidth="2" />
  </Svg>
);

const Tab = ({ icon, children, className = "", closable = true }) => (
  <div className={`flex items-center text-[14px] leading-[20px] ${className}`}>
    {icon}
    <span className="ml-[4px] whitespace-nowrap">{children}</span>
    {closable && <button aria-label={`Close ${children}`} className="ml-[8px]"><CloseTab /></button>}
  </div>
);

const MODELS = ["get_t", "get_t", "get_t", "get_t", "get_t2", "get_tm", "get_tmf", "get_ts", "get_TypeMapping", "get_TypeName", "get_Visits", "get_Visits", "get_Weight", "Index", "InitializeComponent", "InitializeComponent", "labelAnimalType"];

const Models = () => (
  <section className="flex h-[440px] shrink-0 flex-col rounded-[6px] bg-white pb-[3px] pl-[3px] pr-[3px]">
    <div className="-ml-[3px] flex h-[31px] items-start justify-between">
      <Tab icon={<TreeIcon />} className="h-[29px] rounded-t-[6px] border-r border-t border-[#d3d6e4] bg-linear-to-b from-[#dfe1eb] to-white pl-[6px] pr-[7px] pt-[2px]">Models</Tab>
      <div className="flex items-center gap-[7px] pr-[9px] pt-[4px]">
        <button aria-label="Search"><Svg><circle cx="6.500" cy="6.500" r="4" stroke="#333" strokeWidth="2.200" /><path d="m9.500 9.500 4.500 4.500" stroke="#333" strokeWidth="2.800" /></Svg></button>
        <button aria-label="Link with editor"><Svg><path d="M1 4.500 5 1v2h6v3H5v2zM15 11.500 11 8v2H5v3h6v2z" fill="#fdf0c0" stroke="#c88a14" /></Svg></button>
        <button aria-label="Minimize models"><MinIcon /></button>
        <button aria-label="Maximize models"><MaxIcon /></button>
      </div>
    </div>
    <div className="flex min-h-0 flex-1">
      <ul className="min-w-0 flex-1 overflow-hidden pl-[58px]">
        {MODELS.map((m, i) => (
          <li key={i} className="h-[23px]">
            <button className={`flex h-[23px] items-center gap-[5px] whitespace-nowrap pl-[2px] pr-[4px] text-[14px] leading-[20px] ${i < 14 ? "italic" : ""} ${i === 15 ? "bg-[#d9d9d9]" : ""}`}>
              {i === 13 || i === 16 ? <DataObj /> : <Iface />}
              {m}
            </button>
          </li>
        ))}
      </ul>
      <div className="flex w-[19px] flex-col items-center bg-[#f0f0f0] py-[4px]">
        <Chevron d="up" />
        <span className="mt-[33px] h-[21px] w-full bg-[#cdcdcd]" />
        <span className="flex-1" />
        <Chevron d="down" />
      </div>
    </div>
    <div className="flex h-[20px] items-center bg-[#f0f0f0] pl-[3px] pr-[24px]">
      <Chevron d="left" />
      <span className="ml-[4px] h-full w-[59px] bg-[#cdcdcd]" />
      <span className="flex-1" />
      <Chevron d="right" />
    </div>
  </section>
);

const PROPS = [
  ["Na...", "InitializeComponent"], ["Na...", "VetContext1.TestWinFo..."], ["Ful...", "System.Void VetContex..."], ["Par...", "VetContext1.TestWinFo..."],
  ["Ar...", "ApplicationInterface"], ["AP...", "MethodDefinition"], ["De...", "VetContext1.TestWinFo..."], ["EA...", "Application"], ["Tri...", "Files"],
  ["", ""], ["", ""], ["", ""], ["", ""], ["", ""], ["", ""],
];

const Properties = () => (
  <section className="flex min-h-0 flex-1 flex-col overflow-hidden rounded-[6px] border border-[#b3c3e8] bg-white px-[2px] pb-[2px]">
    <div className="-mx-[2px] flex h-[29px] shrink-0 bg-linear-to-b from-[#eff3fd] to-[#cfdbf4]">
      <Tab icon={<TableIcon />} className="rounded-tr-[6px] border-r border-[#b3c3e8] bg-white pl-[5px] pr-[6px]">Properties</Tab>
      <div className="flex flex-1 justify-between border-b border-[#b3c3e8]">
        <Tab icon={<ClipIcon />} closable={false} className="pl-[5px]">Validator</Tab>
        <div className="flex items-start gap-[7px] pr-[10px] pt-[4px]">
          <button aria-label="Minimize properties"><MinIcon /></button>
          <button aria-label="Maximize properties"><MaxIcon /></button>
        </div>
      </div>
    </div>
    <h2 className="flex h-[37px] shrink-0 items-center overflow-hidden whitespace-nowrap border-b border-[#b9cadd] bg-linear-to-b from-white to-[#e3ebf3] pl-[5px] pt-[4px] text-[17px] font-bold leading-[24px] text-[#0078d7]">
      InitializeComponent ...plication Interface)
    </h2>
    <div className="flex min-h-0 flex-1">
      <nav className="flex w-[90px] shrink-0 flex-col border-r border-[#9c9c9c] bg-[#f0f0f0] pt-[11px] text-[14px] leading-[20px]">
        <button className="-mr-px h-[27px] border-b border-r border-t border-[#9c9c9c] bg-linear-to-b from-[#dadacb] to-[#c3c3b2] pl-[7px] text-left">Main</button>
        <button className="-mr-px h-[27px] bg-white pl-[7px] text-left font-bold">Properties</button>
        <button className="-mr-px h-[27px] border-b border-r border-t border-[#9c9c9c] bg-linear-to-b from-[#dadacb] to-[#c3c3b2] pl-[7px] text-left">Analysis</button>
      </nav>
      <div className="mb-[6px] ml-[8px] mt-[11px] min-w-0 flex-1 overflow-hidden border border-[#828790] px-px">
        <table className="w-full table-fixed border-collapse text-left text-[14px] leading-[20px]">
          <colgroup><col className="w-[24px]" /><col className="w-[44px]" /><col /></colgroup>
          <thead>
            <tr className="h-[26px]">
              <td className="border-r border-[#e5e5e5]" />
              <th className="border-r border-[#e5e5e5] pl-[6px] font-normal">Na...</th>
              <th className="border-r border-[#e5e5e5] pl-[6px] font-normal">Value</th>
            </tr>
          </thead>
          <tbody>
            {PROPS.map(([a, b], i) => (
              <tr key={i} className="h-[24px] border-b border-[#ececec]">
                <td className="border-r border-[#ececf2]" />
                <td className="whitespace-nowrap border-r border-[#ececf2] pl-[6px]">{a}</td>
                <td className="overflow-hidden whitespace-nowrap border-r border-[#ececf2] pl-[6px]">{b}</td>
              </tr>
            ))}
          </tbody>
        </table>
      </div>
      <div className="ml-[5px] mr-[5px] mt-[11px] flex h-[71px] w-[19px] flex-col items-center justify-around bg-[#f0f0f0]">
        <button aria-label="Add property"><Svg s={12} v={12}><path d="M6 1v10M1 6h10" stroke="#000" strokeWidth="2.200" /></Svg></button>
        <button aria-label="Add multiple"><Svg s={12} v={12}><path d="M.5.5h6v7h-6zM3 2.500h5v7H3zM5.500 4.500h6v7h-6z" fill="#c9c9c9" stroke="#222" /></Svg></button>
        <button aria-label="Remove property"><Svg s={12} v={12}><path d="M2 2l8 8M10 2l-8 8" stroke="#9a9a9a" strokeWidth="2.200" /></Svg></button>
        <button aria-label="Manage properties"><Svg s={12} v={12}><circle cx="6" cy="6" r="3" stroke="#444" strokeWidth="2" /><circle cx="6" cy="6" r="4.800" stroke="#444" strokeWidth="1.600" strokeDasharray="2 1.770" /></Svg></button>
      </div>
    </div>
  </section>
);

/* ---------- palette ---------- */

const P = ({ d, f = "none", s = K, children, ...r }) => <Svg><path d={d} fill={f} stroke={s} {...r} />{children}</Svg>;
const diag = "M1 15 13 3";
const Chev = (f) => <P d="M2.500 14.500v-8L8 1l5.500 5.500v8L8 9z" f={f} />;
const Inter = (f) => <P d="M7 2.500v11q-5 0-5-5.500t5-5.500zM9.500 2.500v11q5 0 5-5.500t-5-5.500z" f={f} />;
const Collab = (f) => <Svg><circle cx="5.500" cy="8" r="4.500" fill={f} stroke={K} /><circle cx="10.500" cy="8" r="4.500" fill={f} stroke={K} /><circle cx="5.500" cy="8" r="4.500" stroke={K} /></Svg>;

const PALETTE = [
  [
    <P d={diag}><path d="M13 0v7M9.500 3.500h7M11 1l4 5M15 1l-4 5" stroke="#c89b2a" /></P>,
    <P d="M1 15 12 4M7 2.500h6.500V9z" />, <P d="M4 12 13 3"><path d="M1 10h5v5H1zM12 2h3v3h-3z" fill={K} /></P>, <P d="M5 11 13 3M1.500 10.500h4v4h-4zM12.500 1.500h2v2h-2z" />,
    <P d="M2 14 14 2"><circle cx="2" cy="14" r="1.300" fill={K} /><circle cx="14" cy="2" r="1.300" fill={K} /></P>,
    <Svg><path d="M1 15 10 6" stroke={K} strokeDasharray="2 1.500" /><path d="M7 2.500h6.500V9z" stroke={K} /></Svg>, <P d="M1 15 13 3"><path d="M9 2h5.500v5.500z" fill={K} /></P>, <Svg><path d="M1 15 13 3" stroke={K} strokeDasharray="2 1.500" /><path d="M9 2h5.500v5.500z" fill={K} /></Svg>,
    <P d="M1 15 14 2M9 2h5v5" />, <Svg><path d="M1 15 13 3M9 2.500h5v5" stroke={K} strokeDasharray="1.500 1.500" /></Svg>, <P d="M2 14 14 2" />, <Svg><path d="M1 15 13 3" stroke={K} strokeDasharray="2 1.500" /><path d="M9 2h5.500v5.500z" fill={K} /><path d="M9 11h6M12 8v6" stroke={K} /></Svg>,
    <Svg><path d="M2 2.500 7 8 2 13.500M7 8h6" stroke={K} /><circle cx="7" cy="8" r="2.500" fill={K} /><path d="M.5 1.500h2v2h-2zM.5 12.500h2v2h-2zM13.500 7h2v2h-2z" fill="#fff" stroke={K} /></Svg>,
  ],
  [
    <P d="M.5 2.500h14v8.500l-2.500 2.500H.5z" f="#e6ecff"><path d="M3 5.500h9M3 7.500h9M3 9.500h6" stroke="#7f94d6" /></P>,
    <P d="M1.500 2.500h7v3h6v8h-13zM1.500 5.500h7" f="#e0e6f8" />, <P d="M2 15 15 1" />,
  ],
  [
    <P d="M8 7v4.500M4 9h8M8 11l-3 4M8 11l3 4"><circle cx="8" cy="3.500" r="2.600" fill={YE} stroke={K} /></P>,
    <P d="M4 5h8a3 3 0 0 1 0 6H4a3 3 0 0 1 0-6zM11 8 8 6v4z" f={YE} />, Collab(YE), <Iface fill={YE} />,
    Chev(YE), <P d="M1.500 6.500h7V3.500L14 8l-5.500 4.500v-3h-7z" f={YE} />, <P d="M1.500 2.500H9q5 1 5 5.500t-5 5.500H1.500Q4 11 4 8T1.500 2.500z" f={YE} />, Inter(YE),
    <P d="M1.500 2.500h13v11h-13zM1.500 5.500h6v-3" f={YE} />, <DataObj fill={YE} />, <FuncPill fill={YE} />, <Svg><ellipse cx="8" cy="8" rx="7.500" ry="5" fill={YE} stroke={K} /></Svg>,
    <P d="M4 2q4-1.500 4 1 4-2.500 5 0 2 2 .5 4 2 3-.5 5-3 2-5 0-3 3-5 0-3-1-1.500-4-2-3 2.500-6z" f={YE} />, <P d="M2.500 2.500h11v9q-3-1-5 1.500H2.500z" f={YE} />, <DataObj fill={YE} />, <P d="M3.500 6a4.500 4.500 0 0 1 9 0Q12 10 8 15 4 10 3.500 6z" f={YE} />,
  ],
  [
    <P d="M4.500 2.500h10v11h-10zM1.500 4.500h6v3h-6zM1.500 9.500h6v3h-6z" f={CY} />, Collab(CY), <Iface />, <FuncPill />,
    Chev(CY), Inter(CY), <DataObj />,
  ],
  [
    <P d="M3.500 2.500h6l3 3v8h-9zM9.500 2.500v3h3" f={GR} />, <P d="M5 4 1.500 8 5 12M11 4l3.500 4L11 12M4 8h2M7 8h2M10 8h2" f={GR} />,
    <P d="M4 4h9l-2 9H3z"><g fill={GR} stroke={K}><circle cx="4" cy="3.500" r="2" /><circle cx="13" cy="3.500" r="2" /><circle cx="3" cy="13" r="2" /><circle cx="11" cy="13" r="2" /></g></P>, <Iface fill={GR} />,
    Chev(GR), <FuncPill fill={GR} />, <P d="M1.500 4.500 4 2h11v9l-2.500 2.500h-11zM1.500 4.500h11v9M12.500 4.500 15 2" f={GR} />, <Svg><circle cx="10" cy="8" r="4.500" fill={GR} stroke={K} /><circle cx="7" cy="8.500" r="4.500" fill={GR} stroke={K} /></Svg>,
    <P d="M3.500 2.500h9v8h-9zM3.500 10.500l-2 3h13l-2-3" f={GR} />,
  ],
  [
    <P d="M4 5h8a3 3 0 0 1 0 6H4a3 3 0 0 1 0-6zM12 5q-3 3 0 6" f="#ffc8ff" />,
    <Svg><circle cx="8" cy="8" r="6" fill="#ffc8ff" stroke={K} /><path d="M8 1v14M1 8h14M3.500 3.500l9 9M12.500 3.500l-9 9" stroke={K} /></Svg>,
    <P d="M2 14 7 8"><circle cx="9.500" cy="5.500" r="4" fill="#ffc8ff" stroke={K} /></P>,
    <Svg><circle cx="8" cy="8" r="6.500" fill="#ccccff" stroke={K} /><circle cx="8" cy="8" r="4" stroke={K} /><circle cx="8" cy="8" r="1.500" fill={K} /></Svg>,
    <P d="M2.500 2.500h11v11h-11z" f="#ccccff"><path d="M8 4v5.500M8 11v2" stroke={K} strokeWidth="2" /></P>,
    <P d="M4.500 3.500h11l-4 8.500H.5z" f="#ccccff" />, <P d="M4.500 3.500h11l-4 8.500H.5zM8 3.500 4 12M2 8.500h4" f="#ccccff" />,
  ],
  [
    <Svg><rect x=".5" y="2.500" width="15" height="11" rx="2" fill="#ffe0e0" stroke={K} /></Svg>,
    <P d="M1.500 2.500h13v9q-3-1-5 2t-8-1z" f="#ffe0e0" />,
    <Svg><path d="M5 4.500h11M2.500 8h11M0 11.500h11" stroke={K} strokeWidth="2" /></Svg>,
    <Svg><circle cx="8" cy="8" r="5.500" fill="#d8ffd8" stroke={K} /><path d="M0 6.500h16M0 9.500h16" stroke={K} /></Svg>,
  ],
];

const Palette = () => (
  <aside className="flex w-[141px] shrink-0 flex-col border-r-2 border-[#a0a0a0] pr-px">
    <div className="flex h-[28px] items-center border-b border-[#9c9c9c] bg-linear-to-b from-white to-[#f2f2f2] pl-[6px] text-[14px] leading-[20px]">
      <button aria-label="Collapse palette"><Svg><path d="M10.500 3v10L5 8z" fill="#fff" stroke="#777" /></Svg></button>
      <span className="ml-[9px] mr-[4px]"><PaletteIcon /></span>Palette
    </div>
    <div className="flex h-[22px] items-center border-b border-[#d9d9d9] bg-[#efefef] pl-[2px]">
      <button aria-label="Select" className="flex h-[19px] w-[19px] items-center justify-center border border-[#a9a9a9] bg-[#f7f7f7]"><Svg><path d="M5.500 1.500v11l2.500-2.500 2 4.500 1.500-1-2-4h3.500z" fill="#fff" stroke="#7d7a55" /></Svg></button>
      <button aria-label="Marquee" className="ml-[3px]"><Svg><path d="M1.500 1.500h12v12h-12z" stroke="#a58b3a" strokeDasharray="3 2" /><path d="M14 10v5M11.500 12.500h5" stroke="#1c3f78" /></Svg></button>
      <button aria-label="Marquee menu" className="ml-[4px]"><Svg s={8} v={8}><path d="M1 2.500h6L4 6z" fill="#000" /></Svg></button>
      <button aria-label="Format painter" className="ml-[5px]"><Svg><path d="M7.500 1h2v5h3.500v3H4V6h3.500zM4 9l-2 5.500h11V9M6 10v4M8.500 10v4M11 10v4" stroke="#888" fill="#ccc" /></Svg></button>
    </div>
    {PALETTE.map((g, i) => (
      <div key={i} className={`mx-[3px] grid grid-cols-4 ${i ? "border-t border-[#8f8f8f] py-[4px]" : "pb-[3px] pt-[2px]"}`}>
        {g.map((ic, j) => (
          <button key={j} aria-label={`Tool ${i + 1}.${j + 1}`} className="flex h-[23px] items-center pl-[3px]">
            {ic}
            {i === 0 && j === 12 && <Svg s={8} v={8} className="ml-[4px]"><path d="M1 3h6L4 6z" fill="#777" /></Svg>}
          </button>
        ))}
      </div>
    ))}
  </aside>
);

/* ---------- diagram ---------- */

const OX = 2452;
const OY = 409;

const SHAPES = {
  artifact: "border-[#8fab7f] bg-[#c9e7b7]",
  grect: "border-[#8fab7f] bg-[#c9e7b7]",
  gpill: "rounded-[27px] border-[#8fab7f] bg-[#c9e7b7]",
  component: "border-transparent",
  func: "rounded-[9px] border-[#7fb8b8] bg-[#b5ffff]",
  pill: "rounded-[27px] border-[#7fc4c4] bg-[#b5ffff]",
  iface: "border-[#7fb8b8] bg-[#b5ffff]",
  data: "border-[#7fb8b8] bg-[#b5ffff]",
};

const NODES = [
  ["artifact", 2633, 435, "VetContext1.Da|taModel1.dll"], ["artifact", 2934, 435, "VetContext1.D|bContext1.dll"], ["artifact", 3388, 435, "VetContext1.Te|stWinForms1.e|xe"],
  ["component", 2632, 529, "VetContext1.Dat|aModel1"], ["component", 2933, 529, "VetContext1.Db|Context1"], ["component", 3388, 529, "VetContext1.Tes|tWinForms1"],
  ["func", 2633, 625, "VetContext1.Da|taModel1.dll"], ["func", 2934, 625, "VetContext1.D|bContext1.dll"], ["func", 3389, 625, "VetContext1.Te|stWinForms1.e|xe"],
  ["pill", 2465, 751, "Visit"], ["pill", 2597, 751, "Patient"], ["pill", 2729, 751, "AnimalType"], ["pill", 2934, 746, "VetContext"], ["pill", 3295, 747, "MainForm1"], ["pill", 3484, 747, "NewPatientFor|m"],
  ["iface", 2501, 830, "set_AnimalTyp|e1"], ["iface", 2501, 902, "get_AnimalTyp|e"], ["iface", 2752, 830, "set_AnimalTyp|es"], ["iface", 2752, 902, "get_AnimalTyp|es"],
  ["iface", 3065, 830, "Form1_Load"], ["iface", 3209, 830, "InitializeComp|onent"], ["iface", 3413, 830, "set_AnimalTyp|e2"], ["iface", 3413, 902, "get_AnimalTyp|e"], ["iface", 3567, 830, "InitializeComp|onent", "sel"],
  ["data", 2597, 1009, "<AnimalType>|k__BackingFiel|d"], ["data", 2777, 1009, "<AnimalTypes|>k__BackingFi|eld"], ["data", 2934, 1009, "ctx"], ["data", 3295, 1009, "patientDataGri|dView"], ["data", 3494, 1009, "listAnimalType"], ["data", 3637, 1009, "labelAnimalTy|pe"],
  ["gpill", 2777, 1190, "DbSet`1<VetCo|ntext1.DataMo|del1.AnimalTy"], ["gpill", 3295, 1190, "DataGridView"], ["gpill", 3494, 1191, "ListBox"],
  ["pill", 3784, 583, "Res", "cut"], ["pill", 3784, 662, "Se", "cut"], ["pill", 3784, 746, "Pre", "cut"], ["iface", 3784, 829, "N", "cut"], ["grect", 3784, 1106, "", "cut"], ["gpill", 3784, 1190, "App", "cut"],
];
const CUT_PAD = { Res: 32, Se: 38, Pre: 36, N: 45, App: 28 };

const HANDLES = [
  ["-left-[4px]", "-top-[4px]"], ["left-[56px]", "-top-[4px]"], ["-right-[4px]", "-top-[4px]"], ["-left-[4px]", "top-[23px]"],
  ["-right-[4px]", "top-[23px]"], ["-left-[4px]", "-bottom-[4px]"], ["left-[56px]", "-bottom-[4px]"], ["-right-[4px]", "-bottom-[4px]"],
];

const DNode = ({ n: [type, x, y, text, mod] }) => (
  <div
    className={`absolute h-[55px] w-[120px] border text-[11px] leading-[15px] text-black ${SHAPES[type]} ${mod === "sel" ? "outline-2 -outline-offset-1 outline-black" : ""}`}
    style={{ left: x - OX, top: y - OY }}
  >
    {type === "artifact" && <Svg s={18} v={18} className="absolute -right-px -top-px"><path d="M0 0h18v18z" fill="#fff" /><path d="M.5.5v17h17z" fill="#b3cfa2" stroke="#8fab7f" /></Svg>}
    {type === "component" && (
      <>
        <span className="absolute -bottom-px -right-px -top-px left-[9px] border border-[#7fb8b8] bg-[#b5ffff]" />
        <span className="absolute -left-px top-[9px] h-[13px] w-[21px] border border-[#7fb8b8] bg-[#a0e4e2]" />
        <span className="absolute -left-px top-[29px] h-[13px] w-[21px] border border-[#7fb8b8] bg-[#a0e4e2]" />
      </>
    )}
    {type === "func" && <Svg className="absolute right-[4px] top-[5px]"><path d="M2.500 14.500v-8L8 1.500l5.500 5v8L8 9z" stroke={K} /></Svg>}
    {type === "data" && <span className="absolute inset-x-0 top-0 h-[13px] border-b border-[#7fb8b8] bg-[#a0e4e2]" />}
    <div className={`relative h-full overflow-hidden whitespace-nowrap text-center ${type === "data" ? "pt-[14px]" : "pt-[5px]"} ${type === "component" ? "pl-[14px]" : ""}`}>
      {mod === "cut"
        ? <span className="block text-left" style={{ paddingLeft: CUT_PAD[text] }}>{text}</span>
        : text.split("|").map((l, i) => <span key={i} className="block">{l}</span>)}
    </div>
    {type === "iface" && mod !== "cut" && <Svg s={20} v={20} className="absolute right-[2px] top-[2px]"><path d="M0 10.500h7" stroke={K} /><circle cx="12.500" cy="10.500" r="5.500" fill={CY} stroke={K} /></Svg>}
    {mod === "sel" && HANDLES.map(([a, b]) => <span key={a + b} className={`absolute h-[6px] w-[6px] bg-black outline-1 outline-white ${a} ${b}`} />)}
  </div>
);

/* [kind, x1, y1, x2, y2] */
const EDGES = [
  ["real", 2693, 490, 2693, 529], ["real", 2994, 490, 2994, 529], ["real", 3448, 490, 3448, 529],
  ["flow", 2693, 584, 2693, 625], ["flow", 2994, 584, 2994, 625], ["flow", 3448, 584, 3448, 625],
  ["line", 2752, 583, 2938, 628], ["line", 3052, 583, 3392, 628],
  ["real", 2636, 677, 2576, 759], ["real", 2675, 680, 2675, 751], ["real", 2741, 680, 2741, 757], ["real", 2994, 680, 2994, 746], ["real", 3402, 680, 3402, 752], ["real", 3496, 680, 3496, 752],
  ["real", 3509, 631, 3794, 631], ["real", 3509, 671, 3791, 671], ["real", 3506, 677, 3793, 754],
  ["line", 2609, 800, 2609, 902], ["line", 2657, 806, 2657, 1009], ["line", 2737, 798, 2717, 1009],
  ["line", 2943, 793, 2872, 830], ["line", 2943, 793, 2872, 902], ["line", 2943, 793, 2896, 1009], ["line", 2994, 801, 2994, 1009],
  ["acc", 2609, 957, 2609, 1009], ["acc", 2824, 957, 2824, 1009], ["line", 2837, 1064, 2837, 1190],
  ["acc", 3065, 885, 3054, 1009], ["line", 3303, 794, 3185, 830], ["line", 3303, 794, 3054, 1009], ["line", 3312, 801, 3312, 830], ["acc", 3312, 885, 3312, 1009], ["line", 3355, 802, 3355, 1009], ["line", 3355, 1064, 3355, 1190],
  ["line", 3508, 802, 3508, 902], ["acc", 3513, 885, 3513, 1009], ["line", 3549, 802, 3549, 1009], ["line", 3585, 801, 3585, 830], ["line", 3596, 794, 3637, 1009], ["acc", 3590, 889, 3590, 1009], ["acc", 3662, 889, 3662, 1009], ["line", 3554, 1064, 3554, 1191],
];
const LABELS = [
  ["Contains", 2692, 510], ["Contains", 2993, 510], ["Contains", 3448, 510], ["Contains", 2692, 605], ["Contains", 2993, 605], ["Contains", 3448, 605],
  ["References", 2844, 607], ["References", 3072, 607], ["References", 3222, 607],
  ["Defines", 2606, 718], ["Defines", 2675, 716], ["Defines", 2741, 718], ["Defines", 2994, 713], ["Defines", 3402, 716], ["Defines", 3496, 716], ["Defines", 3650, 632], ["Defines", 3649, 672], ["Defines", 3648, 716],
  ["Defines", 2609, 816], ["Defines", 2609, 852], ["Defines", 2657, 908], ["Type For", 2727, 904], ["Defines", 2907, 812], ["Defines", 2907, 848], ["Defines", 2919, 901], ["Type For", 2994, 905],
  ["Accesses", 2609, 983], ["Accesses", 2824, 983], ["Type For", 2837, 1128], ["Accesses", 3059, 947], ["Defines", 3244, 812], ["Defines", 3178, 902], ["Defines", 3312, 815], ["Accesses", 3312, 947], ["Defines", 3355, 906], ["Type For", 3355, 1128],
  ["Defines", 3508, 816], ["Defines", 3508, 852], ["Accesses", 3513, 947], ["Accesses", 3513, 983], ["Defines", 3549, 906], ["Defines", 3585, 815], ["Defines", 3616, 902], ["Accesses", 3590, 947], ["Accesses", 3662, 947], ["Type For", 3554, 1128],
  ["Defines", 3844, 815], ["Defines", 3844, 1176], ["c", 3835, 994],
];

const Diagram = () => (
  <div className="relative min-h-0 flex-1 overflow-hidden bg-white bg-[linear-gradient(#bababa_1px,transparent_1px),linear-gradient(90deg,#bababa_1px,transparent_1px)] bg-[size:12px_12px]">
    {NODES.map((n, i) => <DNode key={i} n={n} />)}
    <svg className="absolute inset-0 h-full w-full" aria-hidden="true">
      {EDGES.map(([k, x1, y1, x2, y2], i) => {
        const from = [x1 - OX + 0.5, y1 - OY + 0.5], to = [x2 - OX + 0.5, y2 - OY + 0.5];
        if (k === "real") return <Arrow key={i} from={from} to={to} kind="tri" len={10} half={7} dash="4 3" />;
        if (k === "flow") return <Arrow key={i} from={from} to={to} kind="open" len={8} half={3} />;
        if (k === "acc") return <Arrow key={i} from={from} to={to} kind="open" len={7} half={3} dash="2 3" />;
        return <Arrow key={i} from={from} to={to} />;
      })}
      <path d="M300 174 537 191A5 5 0 0 1 547 191L940 219" stroke="#000" fill="none" />
    </svg>
    {LABELS.map(([t, x, y], i) => (
      <span key={i} className="absolute -translate-x-1/2 -translate-y-1/2 whitespace-nowrap text-[11px] leading-[15px] text-black" style={{ left: x - OX, top: y - OY }}>{t}</span>
    ))}
  </div>
);

const Editor = () => (
  <section className="flex min-w-0 flex-1 flex-col rounded-[6px] bg-white pb-[4px]">
    <div className="flex h-[31px] shrink-0 items-start justify-between">
      <Tab icon={<DiagramIcon />} className="h-[29px] rounded-t-[6px] border-r border-t border-[#d3d6e4] bg-linear-to-b from-[#dfe1eb] to-white pl-[5px] pr-[6px] pt-[2px]">Test6 Model: Test6 View</Tab>
      <div className="flex gap-[7px] pr-[11px] pt-[4px]">
        <button aria-label="Minimize editor"><MinIcon /></button>
        <button aria-label="Maximize editor"><MaxIcon /></button>
      </div>
    </div>
    <div className="flex min-h-0 flex-1 pl-[3px] pr-[2px]">
      <Palette />
      <div className="flex min-w-0 flex-1 flex-col">
        <Diagram />
        <div className="flex h-[20px] shrink-0 items-center bg-[#f0f0f0] pl-[3px] pr-[4px]">
          <Chevron d="left" />
          <span className="ml-[4px] mr-[72px] h-full flex-1 bg-[#cdcdcd]" />
          <Chevron d="right" />
        </div>
      </div>
    </div>
  </section>
);

const RightWindow = () => (
  <section className="flex min-h-0 flex-1 flex-col bg-[#f0ebdf]">
    <header className="flex h-[28px] shrink-0 items-center justify-between bg-white pl-[3px] pr-[2px]">
      <div className="flex items-center gap-[6px] text-[14px] leading-[20px]"><ArchiLogo />Archi</div>
      <WindowButtons />
    </header>
    <nav className="flex h-[24px] shrink-0 items-center gap-[15px] bg-white pl-[7px] pt-[3px] text-[14px] leading-[20px]">
      {["File", "Edit", "View", "Tools", "Window", "Help"].map((m) => <button key={m}>{m}</button>)}
    </nav>
    <Toolbar />
    <div className="flex min-h-0 flex-1 gap-[4px] pb-[29px] pl-[3px] pr-[4px] pt-[4px]">
      <div className="flex w-[381px] shrink-0 flex-col gap-[4px]">
        <Models />
        <Properties />
      </div>
      <Editor />
    </div>
  </section>
);

const TrayIcons = () => (
  <>
    <TB label="Show hidden icons" className="w-[30px]"><Svg><path d="M1 11 8 4l7 7" stroke="#fff" strokeWidth="1.300" /></Svg></TB>
    <TB label="Mail" className="w-[30px]"><Svg><rect y="2" width="16" height="12" fill="#eec48a" /><path d="M0 3q8 10 16 0" stroke="#2b2015" strokeWidth="1.500" /></Svg></TB>
    <TB label="Outlook tray" className="w-[30px]"><Office c="#0a70c8" l="O"><path d="M11 8h10v7H11zM11 8l5 4.500L21 8" stroke="#0a70c8" strokeWidth="1.200" /></Office></TB>
    <TB label="OneDrive" className="w-[30px]"><Svg s={18} v={18}><path d="M4 15q-4 0-3.500-3.500Q1 9 3.500 9 3 4 8 3.500q4 0 4.500 4 5 .5 5 4T14 15z" fill="#fff" /><path d="M6 15q-2-5 3-5.500 2-3 5 0" stroke="#111" /></Svg></TB>
    <TB label="Network" className="w-[30px]"><Svg s={20} v={20}><path d="M5.500 4.500h14v9h-14zM12 14v3M8 17.500h8M1.500 2.500h3v4h-3zM3 7v8" stroke="#fff" strokeWidth="1.200" /></Svg></TB>
    <TB label="Antivirus" className="w-[30px]"><Svg s={20} v={20}><path d="M2 1h5v6l5-6h6l-7 8 6 9h-5l-5-7v5H2z" fill="#e02a20" /><path d="M2 1h3v18H2z" fill="#f6c9c5" /><path d="M12 11h7v8l-3-3z" fill="#999" /></Svg></TB>
    <TB label="Touch keyboard" className="w-[42px]"><svg width="30" height="18" viewBox="0 0 30 18" fill="none"><rect x=".5" y="1.500" width="29" height="15" stroke="#fff" /><path d="M3 5.500h24M3 9h24" stroke="#fff" strokeWidth="1.500" strokeDasharray="2 1.500" /><path d="M4 12.500h3M9 12.500h12M23 12.500h3" stroke="#fff" strokeWidth="1.500" /></svg></TB>
    <span className="w-[44px] text-center text-[14px] leading-[20px]">ENG</span>
    <span className="w-[79px] text-center text-[14px] leading-[20px]">1:46 PM</span>
    <TB label="Notifications" className="mr-[10px] w-[48px]"><Svg s={22} v={22}><path d="M1 2h20v15h-8l-3 3v-3H1z" fill="#fff" /><path d="M5 6.500h12M5 9.500h12M5 12.500h8" stroke="#111" /></Svg></TB>
    <span className="mr-[5px] h-full w-px bg-[#555]" />
  </>
);

export default function App() {
  return (
    <main className="grid h-screen grid-cols-2 overflow-hidden bg-black font-['Open_Sans','Noto_Sans',sans-serif] text-black">
      <div className="flex min-h-0 min-w-0 flex-col pb-[298px]">
        <LeftWindow />
        <Taskbar wide running={RUN}>
          <span className="pr-[13px] text-[14px] leading-[20px]">1:46 PM</span>
        </Taskbar>
      </div>
      <div className="flex min-h-0 min-w-0 flex-col pt-[298px]">
        <RightWindow />
        <Taskbar running={RUN} hot="Store">
          <TrayIcons />
        </Taskbar>
      </div>
    </main>
  );
}
